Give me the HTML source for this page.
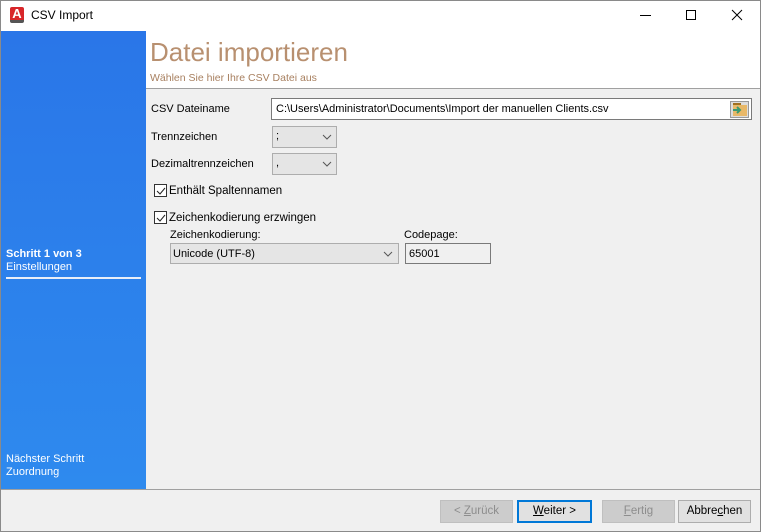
<!DOCTYPE html>
<html><head><style>
*{margin:0;padding:0;box-sizing:border-box}
body{width:761px;height:532px;overflow:hidden;font-family:"Liberation Sans",sans-serif;font-size:11px;color:#000;background:#f0f0f0;position:relative}
.a{position:absolute}
.win{left:0;top:0;width:761px;height:532px;border:1px solid #8a8a8a}
.btn{position:absolute;top:500px;height:23px;border:1px solid #adadad;background:#e1e1e1;text-align:center;line-height:21px;font-size:11.5px}
.dis{background:#cccccc;border-color:#bfbfbf;color:#8d8d8d}
.cb{position:absolute;width:13px;height:13px;border:1px solid #333;background:#fff}
.combo{position:absolute;border:1px solid #adadad;background:#e5e5e5}
</style></head><body>
<div class="a win"></div>
<div class="a" style="left:1px;top:1px;width:759px;height:30px;background:#fff"></div>
<div class="a" style="left:10px;top:7px;width:14px;height:16px;background:#d8262a;border-radius:2px;color:#fff;font-weight:bold;font-size:13px;line-height:14px;text-align:center;border-bottom:3px solid #555">A</div>
<div class="a" style="left:31px;top:8px;font-size:12px">CSV Import</div>
<div class="a" style="left:640px;top:15px;width:11px;height:1px;background:#000"></div>
<div class="a" style="left:686px;top:10px;width:10px;height:10px;border:1px solid #000"></div>
<svg class="a" style="left:731px;top:9px" width="12" height="12"><path d="M1 1L11 11M11 1L1 11" stroke="#000" stroke-width="1"/></svg>
<div class="a" style="left:1px;top:31px;width:145px;height:458px;background:linear-gradient(#2a76e8,#2e8aee)"></div>
<div class="a" style="left:6px;top:248px;color:#fff;font-weight:bold;font-size:11px">Schritt 1 von 3</div>
<div class="a" style="left:6px;top:261px;color:#fff;font-size:11px">Einstellungen</div>
<div class="a" style="left:6px;top:277px;width:135px;height:2px;background:#e8eef8"></div>
<div class="a" style="left:6px;top:453px;color:#fff;font-size:11px">Nächster Schritt</div>
<div class="a" style="left:6px;top:466px;color:#fff;font-size:11px">Zuordnung</div>
<div class="a" style="left:146px;top:31px;width:614px;height:58px;background:#fff;border-bottom:1px solid #a0a0a0"></div>
<div class="a" style="left:150px;top:37px;font-size:26px;color:#b89070">Datei importieren</div>
<div class="a" style="left:150px;top:72px;font-size:10.5px;color:#a88060">Wählen Sie hier Ihre CSV Datei aus</div>
<div class="a" style="left:151px;top:103px">CSV Dateiname</div>
<div class="a" style="left:271px;top:98px;width:481px;height:22px;background:#fff;border:1px solid #7a7a7a"></div>
<div class="a" style="left:276px;top:103px">C:\Users\Administrator\Documents\Import der manuellen Clients.csv</div>
<div class="a" style="left:730px;top:101px;width:19px;height:17px;background:#ddd;border:1px solid #999"></div>
<div class="a" style="left:733px;top:103px;width:8px;height:3px;background:#a07020"></div>
<div class="a" style="left:733px;top:105px;width:14px;height:11px;background:#e8b868"></div>
<svg class="a" style="left:732px;top:106px" width="12" height="8"><path d="M1 4H8M5 1L8 4L5 7" stroke="#3a9a70" stroke-width="2" fill="none"/></svg>
<div class="a" style="left:151px;top:131px">Trennzeichen</div>
<div class="combo" style="left:272px;top:126px;width:65px;height:22px"></div>
<div class="a" style="left:276px;top:130px">;</div>
<div class="a" style="left:151px;top:158px">Dezimaltrennzeichen</div>
<div class="combo" style="left:272px;top:153px;width:65px;height:22px"></div>
<div class="a" style="left:276px;top:157px">,</div>
<svg class="a" style="left:322px;top:134px" width="10" height="6"><path d="M1 1L5 5L9 1" stroke="#555" fill="none"/></svg>
<svg class="a" style="left:322px;top:161px" width="10" height="6"><path d="M1 1L5 5L9 1" stroke="#555" fill="none"/></svg>
<div class="cb" style="left:154px;top:184px"></div>
<svg class="a" style="left:155px;top:185px" width="12" height="12"><path d="M2 6L5 9L10 3" stroke="#222" fill="none"/></svg>
<div class="a" style="left:169px;top:185px;font-size:11.5px">Enthält Spaltennamen</div>
<div class="cb" style="left:154px;top:211px"></div>
<svg class="a" style="left:155px;top:212px" width="12" height="12"><path d="M2 6L5 9L10 3" stroke="#222" fill="none"/></svg>
<div class="a" style="left:169px;top:212px;font-size:11.5px">Zeichenkodierung erzwingen</div>
<div class="a" style="left:170px;top:229px">Zeichenkodierung:</div>
<div class="a" style="left:404px;top:229px">Codepage:</div>
<div class="combo" style="left:170px;top:243px;width:229px;height:21px"></div>
<div class="a" style="left:173px;top:248px">Unicode (UTF-8)</div>
<svg class="a" style="left:383px;top:251px" width="10" height="6"><path d="M1 1L5 5L9 1" stroke="#555" fill="none"/></svg>
<div class="a" style="left:405px;top:243px;width:86px;height:21px;background:#f0f0f0;border:1px solid #7a7a7a"></div>
<div class="a" style="left:409px;top:248px">65001</div>
<div class="a" style="left:1px;top:489px;width:759px;height:1px;background:#a0a0a0"></div>
<div class="btn dis" style="left:440px;width:73px">&lt; <u>Z</u>urück</div>
<div class="btn" style="left:517px;width:75px;border:2px solid #0078d7;line-height:19px"><u>W</u>eiter &gt;</div>
<div class="btn dis" style="left:602px;width:73px"><u>F</u>ertig</div>
<div class="btn" style="left:678px;width:73px">Abbre<u>c</u>hen</div>
</body></html>
